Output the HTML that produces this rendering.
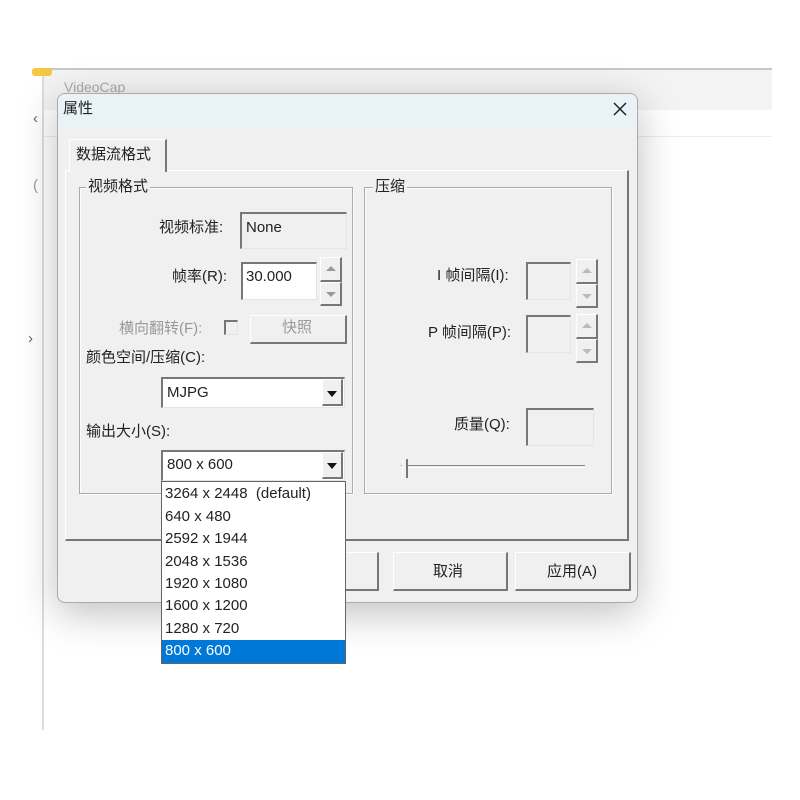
<!DOCTYPE html>
<html><head><meta charset="utf-8"><style>
*{margin:0;padding:0;box-sizing:border-box}
body{width:800px;height:800px;background:#fff;position:relative;overflow:hidden;font-family:"Liberation Sans","Noto Sans CJK SC",sans-serif;font-size:15px;color:#222}
.a{position:absolute}
.t{position:absolute;white-space:nowrap;line-height:18px}
.sunk{position:absolute;border-top:2px solid #777;border-left:2px solid #777;border-right:1px solid #e4e4e4;border-bottom:1px solid #e4e4e4}
.raised{position:absolute;background:#f0f0f0;border-top:1px solid #fff;border-left:1px solid #fff;border-right:2px solid #777;border-bottom:2px solid #777}
.grp{position:absolute;border:1px solid #aaa;box-shadow:1px 1px 0 #fff inset,1px 1px 0 #fff}
.lbl{position:absolute;background:#f0f0f0;padding:0 2px;line-height:16px}
.arr{position:absolute;width:0;height:0;border-left:5px solid transparent;border-right:5px solid transparent}
</style></head><body>
<!-- background window -->
<div class="a" style="left:42px;top:68px;width:730px;height:662px;border-left:2px solid #ddd;border-top:2px solid #c8c8c8;background:#fff"></div>
<div class="a" style="left:44px;top:70px;width:728px;height:40px;background:#f3f3f3"></div>
<div class="a" style="left:44px;top:136px;width:728px;height:1px;background:#ececec"></div>
<div class="a" style="left:32px;top:68px;width:20px;height:8px;background:#f5c842;border-radius:3px"></div>
<div class="t" style="left:64px;top:78px;color:#aaa;font-size:14px">VideoCap</div>
<div class="t" style="left:33px;top:110px;color:#666">‹</div>
<div class="t" style="left:28px;top:330px;color:#666">›</div>
<div class="t" style="left:33px;top:177px;color:#999">(</div>
<!-- dialog -->
<div class="a" style="left:57px;top:93px;width:581px;height:510px;background:#f0f0f0;border:1px solid #aaa;border-radius:8px;box-shadow:0 10px 40px rgba(0,0,0,.25);overflow:hidden">
 <div class="a" style="left:0;top:0;width:581px;height:32px;background:#e9f2f6"></div>
</div>
<div class="t" style="left:63px;top:100px;font-size:15px">属性</div>
<svg class="a" style="left:612px;top:101px" width="16" height="16"><path d="M2 2L14 14M14 2L2 14" stroke="#222" stroke-width="1.5"/></svg>
<!-- tab -->
<div class="a" style="left:65px;top:170px;width:564px;height:371px;border-top:1px solid #fff;border-left:1px solid #fff;border-right:2px solid #777;border-bottom:2px solid #777"></div>
<div class="a" style="left:69px;top:139px;width:98px;height:33px;background:#f0f0f0;border-top:1px solid #fff;border-left:1px solid #fff;border-right:2px solid #777"></div>
<div class="t" style="left:76px;top:146px">数据流格式</div>
<!-- group video -->
<div class="grp" style="left:79px;top:187px;width:274px;height:307px"></div>
<div class="lbl" style="left:86px;top:179px">视频格式</div>
<div class="t" style="left:159px;top:219px">视频标准:</div>
<div class="sunk" style="left:240px;top:212px;width:107px;height:37px"></div>
<div class="t" style="left:246px;top:219px">None</div>
<div class="t" style="left:172px;top:268px">帧率(R):</div>
<div class="sunk" style="left:241px;top:262px;width:76px;height:38px;background:#fff"></div>
<div class="t" style="left:246px;top:268px">30.000</div>
<div class="raised" style="left:320px;top:257px;width:22px;height:25px"></div>
<div class="raised" style="left:320px;top:282px;width:22px;height:24px"></div>
<div class="arr" style="left:326px;top:266px;border-bottom:5px solid #999"></div>
<div class="arr" style="left:326px;top:292px;border-top:5px solid #999"></div>
<div class="t" style="left:119px;top:320px;color:#999">横向翻转(F):</div>
<div class="sunk" style="left:224px;top:320px;width:14px;height:15px"></div>
<div class="raised" style="left:250px;top:315px;width:97px;height:29px"></div>
<div class="t" style="left:282px;top:319px;color:#999">快照</div>
<div class="t" style="left:86px;top:349px">颜色空间/压缩(C):</div>
<div class="sunk" style="left:161px;top:377px;width:184px;height:31px;background:#fff"></div>
<div class="t" style="left:167px;top:384px">MJPG</div>
<div class="raised" style="left:322px;top:379px;width:21px;height:27px"></div>
<div class="arr" style="left:327px;top:391px;border-top:6px solid #111"></div>
<div class="t" style="left:86px;top:423px">输出大小(S):</div>
<div class="sunk" style="left:161px;top:450px;width:184px;height:31px;background:#fff"></div>
<div class="t" style="left:167px;top:456px">800 x 600</div>
<div class="raised" style="left:322px;top:452px;width:21px;height:27px"></div>
<div class="arr" style="left:327px;top:463px;border-top:6px solid #111"></div>
<!-- group compress -->
<div class="grp" style="left:364px;top:187px;width:248px;height:307px"></div>
<div class="lbl" style="left:373px;top:179px">压缩</div>
<div class="t" style="left:437px;top:267px">I 帧间隔(I):</div>
<div class="sunk" style="left:526px;top:262px;width:45px;height:38px"></div>
<div class="raised" style="left:576px;top:259px;width:22px;height:25px"></div>
<div class="raised" style="left:576px;top:284px;width:22px;height:24px"></div>
<div class="arr" style="left:582px;top:268px;border-bottom:5px solid #bbb"></div>
<div class="arr" style="left:582px;top:294px;border-top:5px solid #bbb"></div>
<div class="t" style="left:428px;top:324px">P 帧间隔(P):</div>
<div class="sunk" style="left:526px;top:315px;width:45px;height:38px"></div>
<div class="raised" style="left:576px;top:314px;width:22px;height:25px"></div>
<div class="raised" style="left:576px;top:339px;width:22px;height:24px"></div>
<div class="arr" style="left:582px;top:323px;border-bottom:5px solid #bbb"></div>
<div class="arr" style="left:582px;top:349px;border-top:5px solid #bbb"></div>
<div class="t" style="left:454px;top:416px">质量(Q):</div>
<div class="sunk" style="left:526px;top:408px;width:68px;height:38px"></div>
<div class="a" style="left:401px;top:465px;width:184px;height:3px;border-top:1px solid #888;border-bottom:1px solid #fff"></div>
<div class="a" style="left:402px;top:459px;width:6px;height:19px;border-left:1px solid #fff;border-right:2px solid #777;background:#f0f0f0"></div>
<!-- buttons -->
<div class="raised" style="left:290px;top:552px;width:89px;height:39px"></div>
<div class="raised" style="left:393px;top:552px;width:115px;height:39px"></div>
<div class="t" style="left:433px;top:563px">取消</div>
<div class="raised" style="left:515px;top:552px;width:116px;height:39px"></div>
<div class="t" style="left:547px;top:563px">应用(A)</div>
<!-- dropdown -->
<div class="a" style="left:161px;top:481px;width:185px;height:183px;background:#fff;border:1px solid #646464"></div>
<div class="a" style="left:162px;top:640px;width:183px;height:23px;background:#0078d7"></div>
<div class="t" style="left:165px;top:485px">3264 x 2448 &nbsp;(default)</div>
<div class="t" style="left:165px;top:508px">640 x 480</div>
<div class="t" style="left:165px;top:530px">2592 x 1944</div>
<div class="t" style="left:165px;top:553px">2048 x 1536</div>
<div class="t" style="left:165px;top:575px">1920 x 1080</div>
<div class="t" style="left:165px;top:597px">1600 x 1200</div>
<div class="t" style="left:165px;top:620px">1280 x 720</div>
<div class="t" style="left:165px;top:642px;color:#fff">800 x 600</div>
</body></html>
